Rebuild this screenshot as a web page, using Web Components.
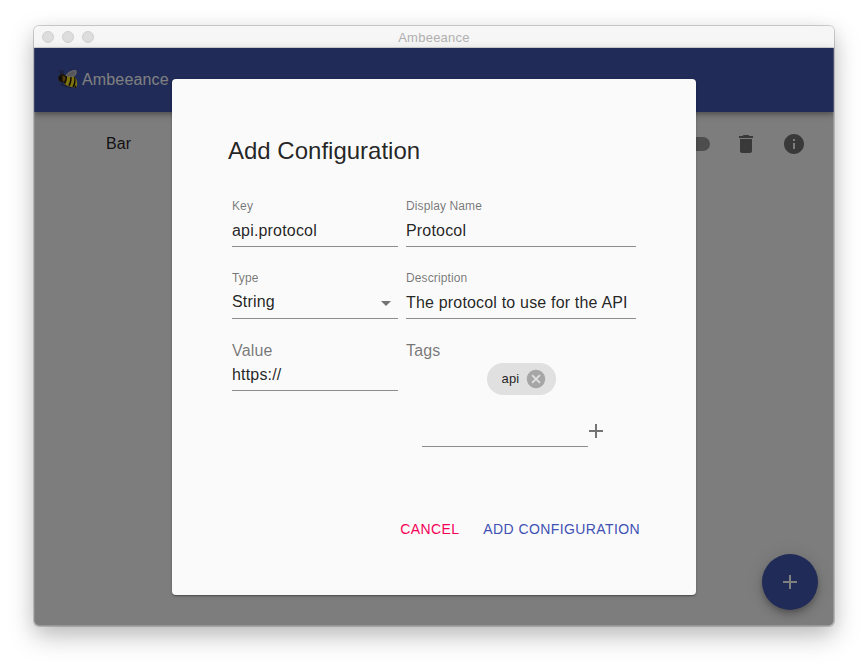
<!DOCTYPE html>
<html lang="en">
<head>
<meta charset="utf-8">
<title>Ambeeance</title>
<style>
html,body{margin:0;height:100%;background:#fff}
body{font-family:"Liberation Sans",Arial,Helvetica,sans-serif;overflow:hidden}
</style>
</head>
<body>
<app-window heading="Ambeeance">
  <app-bar>Ambeeance</app-bar>
  <config-row>Bar</config-row>
  <fab-button></fab-button>
  <modal-dialog slot="modal" heading="Add Configuration">
    <text-field label="Key">api.protocol</text-field>
    <text-field label="Display Name">Protocol</text-field>
    <text-field label="Type" select>String</text-field>
    <text-field label="Description">The protocol to use for the API</text-field>
    <text-field label="Value" large>https://</text-field>
    <tag-editor label="Tags"><tag-chip>api</tag-chip></tag-editor>
    <flat-button slot="actions" style="--ink:#f50057">CANCEL</flat-button>
    <flat-button slot="actions" style="--ink:#3f51b5">ADD CONFIGURATION</flat-button>
  </modal-dialog>
</app-window>
<script>
function define(name, render){
  customElements.define(name, class extends HTMLElement{
    constructor(){super();this.attachShadow({mode:'open'});}
    connectedCallback(){this.shadowRoot.innerHTML=render(this);}
  });
}

define('app-window', el=>`<style>
:host{display:block;box-sizing:border-box;padding:26px 34px 42px;height:668px}
.frame{display:flex;flex-direction:column;width:800px;height:600px;border-radius:5px;overflow:hidden}
.shadow{width:800px;height:600px;border-radius:5px;box-shadow:0 0 0 1px rgba(0,0,0,.17),0 10px 26px rgba(0,0,0,.25),0 3px 18px rgba(0,0,0,.06)}
.title{box-sizing:border-box;height:22px;flex:none;background:#f6f6f6;border-bottom:1px solid #d3d3d3;display:grid;grid-template-columns:1fr auto 1fr;align-items:center;padding:0 8px}
.dots{display:flex;gap:8px}
.dots i{box-sizing:border-box;width:12px;height:12px;border-radius:50%;background:#ddd;border:1px solid #cfcfcf}
.name{font-size:13px;line-height:20px;letter-spacing:.25px;color:#b0b0b0;padding-top:2px}
.view{position:relative;flex:1;background:#fafafa;display:flex;flex-direction:column}
.view::after{content:"";position:absolute;inset:0;pointer-events:none;box-shadow:inset 1px 0 rgba(255,255,255,.12),inset -1px 0 rgba(255,255,255,.2),inset 0 -1px rgba(255,255,255,.2);border-radius:0 0 5px 5px}
</style><div class="shadow"><div class="frame"><div class="title"><div class="dots"><i></i><i></i><i></i></div><div class="name">${el.getAttribute('heading')}</div><span></span></div><div class="view"><slot></slot><slot name="modal"></slot></div></div></div>`);

define('bee-icon', ()=>`<style>:host{display:block;width:20px;height:20px}svg{display:block}</style>
<svg width="20" height="20" viewBox="0 0 20 20">
<g fill="none" stroke="#2a2a2a" stroke-width=".8" stroke-linecap="round"><path d="M3.400 6Q3.400 2.500 1 1.700M4.900 5.500Q5.800 2.500 4.300 1.300M4.400 13.400l-.6 2.400 1.600.8M7.600 14.300l-.8 2.700 1.900 1M11 16l.2 2.200 1.600.5"/></g>
<path d="M6.200 6.600C9 5 14.800 5.400 17.500 8.900c1.900 2.700 2.200 6.200.8 9.600-3.700-.2-9.300-1-12.300-4z" fill="#ffe61c"/>
<path d="M7.300 6.200c.7 3-.2 6-1.700 7.900l1.500 1C8.900 12 9.400 9 8.900 5.900zM11.900 6.100c.9 3.500.1 7-1.600 10.200l1.600.6c1.600-3.500 2.200-7 1.500-10.400zM15.900 7.500c1 3.700.1 7-1.500 10.400l1.500.4c1.700-3.300 2.100-6 1.300-9.400zM17.700 16.100l.5 3-2-.6z" fill="#171208"/>
<path d="M7.500 6.700C9.300 2.700 15.200.1 18.300 1.200c1.500 2.300-.1 5.700-3.300 6.600-2.300.6-5.200-.3-7.500-1.100z" fill="#c6c6cc"/>
<path d="M8.800 6.500C11 3.900 15 1.900 17.900 2.500c-.3 2.400-2.500 4-5.200 4.400z" fill="#adadb4"/>
<circle cx="4.200" cy="9.200" r="3.900" fill="#3a2b0e"/><ellipse cx="2.300" cy="9.100" rx="1.100" ry="1.600" fill="#0c0c0c"/><path d="M4.700 6.800q2.800.5 2.700 3-.1 2.200-2.200 2.800-.9-2.600-.5-5.800z" fill="#a87c1c"/>
</svg>`);

define('app-bar', ()=>`<style>
:host{display:flex;align-items:center;box-sizing:border-box;height:64px;flex:none;background:#4056b0;color:#fff;padding:0 24px;gap:4px;font-size:16px;line-height:24px;letter-spacing:.15px;box-shadow:0 2px 4px -1px rgba(0,0,0,.2),0 4px 5px rgba(0,0,0,.14),0 1px 10px rgba(0,0,0,.12)}
bee-icon{margin-top:-2px}</style><bee-icon></bee-icon><span><slot></slot></span>`);

define('config-row', ()=>`<style>
:host{display:flex;align-items:center;height:64px;padding:0 28px 0 72px;color:rgba(0,0,0,.87);font-size:16px;letter-spacing:.15px}
span{flex:1}.track{width:34px;height:14px;border-radius:7px;background:#000;opacity:.38}
svg{fill:rgba(0,0,0,.54);margin-left:24px;display:block}
</style><span><slot></slot></span><div class="track"></div>
<svg width="24" height="24" viewBox="0 0 24 24"><path d="M6 19c0 1.1.9 2 2 2h8c1.1 0 2-.9 2-2V7H6v12zM19 4h-3.500l-1-1h-5l-1 1H5v2h14V4z"/></svg>
<svg width="24" height="24" viewBox="0 0 24 24"><path d="M12 2C6.480 2 2 6.480 2 12s4.480 10 10 10 10-4.480 10-10S17.520 2 12 2zm1 15h-2v-6h2v6zm0-8h-2V7h2v2z"/></svg>`);

define('fab-button', ()=>`<style>
:host{position:absolute;right:16px;bottom:16px;width:56px;height:56px;border-radius:50%;background:#4056b0;display:grid;place-items:center;box-shadow:0 3px 5px -1px rgba(0,0,0,.2),0 6px 10px rgba(0,0,0,.14),0 1px 18px rgba(0,0,0,.12)}
svg{fill:#fff}</style><svg width="24" height="24" viewBox="0 0 24 24"><path d="M19 13h-6v6h-2v-6H5v-2h6V5h2v6h6v2z"/></svg>`);

define('modal-dialog', el=>`<style>
:host{position:absolute;inset:0;background:rgba(0,0,0,.5);display:grid;place-items:center}
.paper{box-sizing:border-box;width:524px;height:516px;border-radius:4px;background:#fafafa;padding:56px;display:flex;flex-direction:column;box-shadow:0 1px 3px rgba(0,0,0,.2),0 1px 1px rgba(0,0,0,.14),0 2px 1px -1px rgba(0,0,0,.12)}
h2{margin:0;font-size:24px;font-weight:400;line-height:32px;color:rgba(0,0,0,.87)}
.grid{display:grid;grid-template-columns:166px 230px;column-gap:8px;row-gap:23px;padding:31px 4px 0;align-items:start}
.actions{display:flex;justify-content:flex-end;gap:24px;margin-top:auto}
</style><div class="paper"><h2>${el.getAttribute('heading')}</h2><div class="grid"><slot></slot></div><div class="actions"><slot name="actions"></slot></div></div>`);

define('text-field', el=>`<style>
:host{display:flex;flex-direction:column;box-sizing:border-box;height:49px;border-bottom:1px solid #8d8d8d}
label{font-size:12px;line-height:16px;letter-spacing:.11px;color:rgba(0,0,0,.54)}
.v{display:flex;justify-content:space-between;font-size:16px;line-height:20px;letter-spacing:.18px;padding-top:7px;color:rgba(0,0,0,.87)}
:host([select]) .v{padding-top:6px}
:host([large]) label{font-size:16px;line-height:17px;letter-spacing:.15px}
:host([large]) .v{padding-top:6px}
svg{fill:rgba(0,0,0,.54);display:block;margin:-1px 0 -3px}
</style><label>${el.getAttribute('label')}</label><div class="v"><span><slot></slot></span>${el.hasAttribute('select')?'<svg width="24" height="24" viewBox="0 0 24 24"><path d="M7 10l5 5 5-5z"/></svg>':''}</div>`);

define('tag-editor', el=>`<style>
:host{display:flex;flex-direction:column}
label{font-size:16px;line-height:17px;letter-spacing:.15px;color:rgba(0,0,0,.54)}
.chips{display:flex;justify-content:center;padding-top:4px}
.entry{display:flex;align-items:flex-end;padding:20px 0 0 16px}
.line{box-sizing:border-box;width:166px;height:32px;border-bottom:1px solid #8d8d8d}
svg{fill:rgba(0,0,0,.54);margin:0 0 4px -4px}
</style><label>${el.getAttribute('label')}</label><div class="chips"><slot></slot></div><div class="entry"><div class="line"></div><svg width="24" height="24" viewBox="0 0 24 24"><path d="M19 13h-6v6h-2v-6H5v-2h6V5h2v6h6v2z"/></svg></div>`);

define('tag-chip', ()=>`<style>
:host{display:flex;align-items:center;box-sizing:border-box;width:69px;height:32px;border-radius:16px;background:#e0e0e0;color:rgba(0,0,0,.87);font-size:13px;line-height:16px;letter-spacing:.15px;padding:0 9px 0 15px;justify-content:space-between}
svg{fill:#a6a6a6}
</style><span><slot></slot></span><svg width="22" height="22" viewBox="0 0 24 24"><path d="M12 2C6.470 2 2 6.470 2 12s4.470 10 10 10 10-4.470 10-10S17.530 2 12 2zm5 13.590L15.590 17 12 13.410 8.410 17 7 15.590 10.590 12 7 8.410 8.410 7 12 10.590 15.590 7 17 8.410 13.410 12 17 15.590z"/></svg>`);

define('flat-button', ()=>`<style>
:host{display:block;color:var(--ink);font-size:14px;line-height:20px;letter-spacing:.4px}
</style><slot></slot>`);
</script>
</body>
</html>
